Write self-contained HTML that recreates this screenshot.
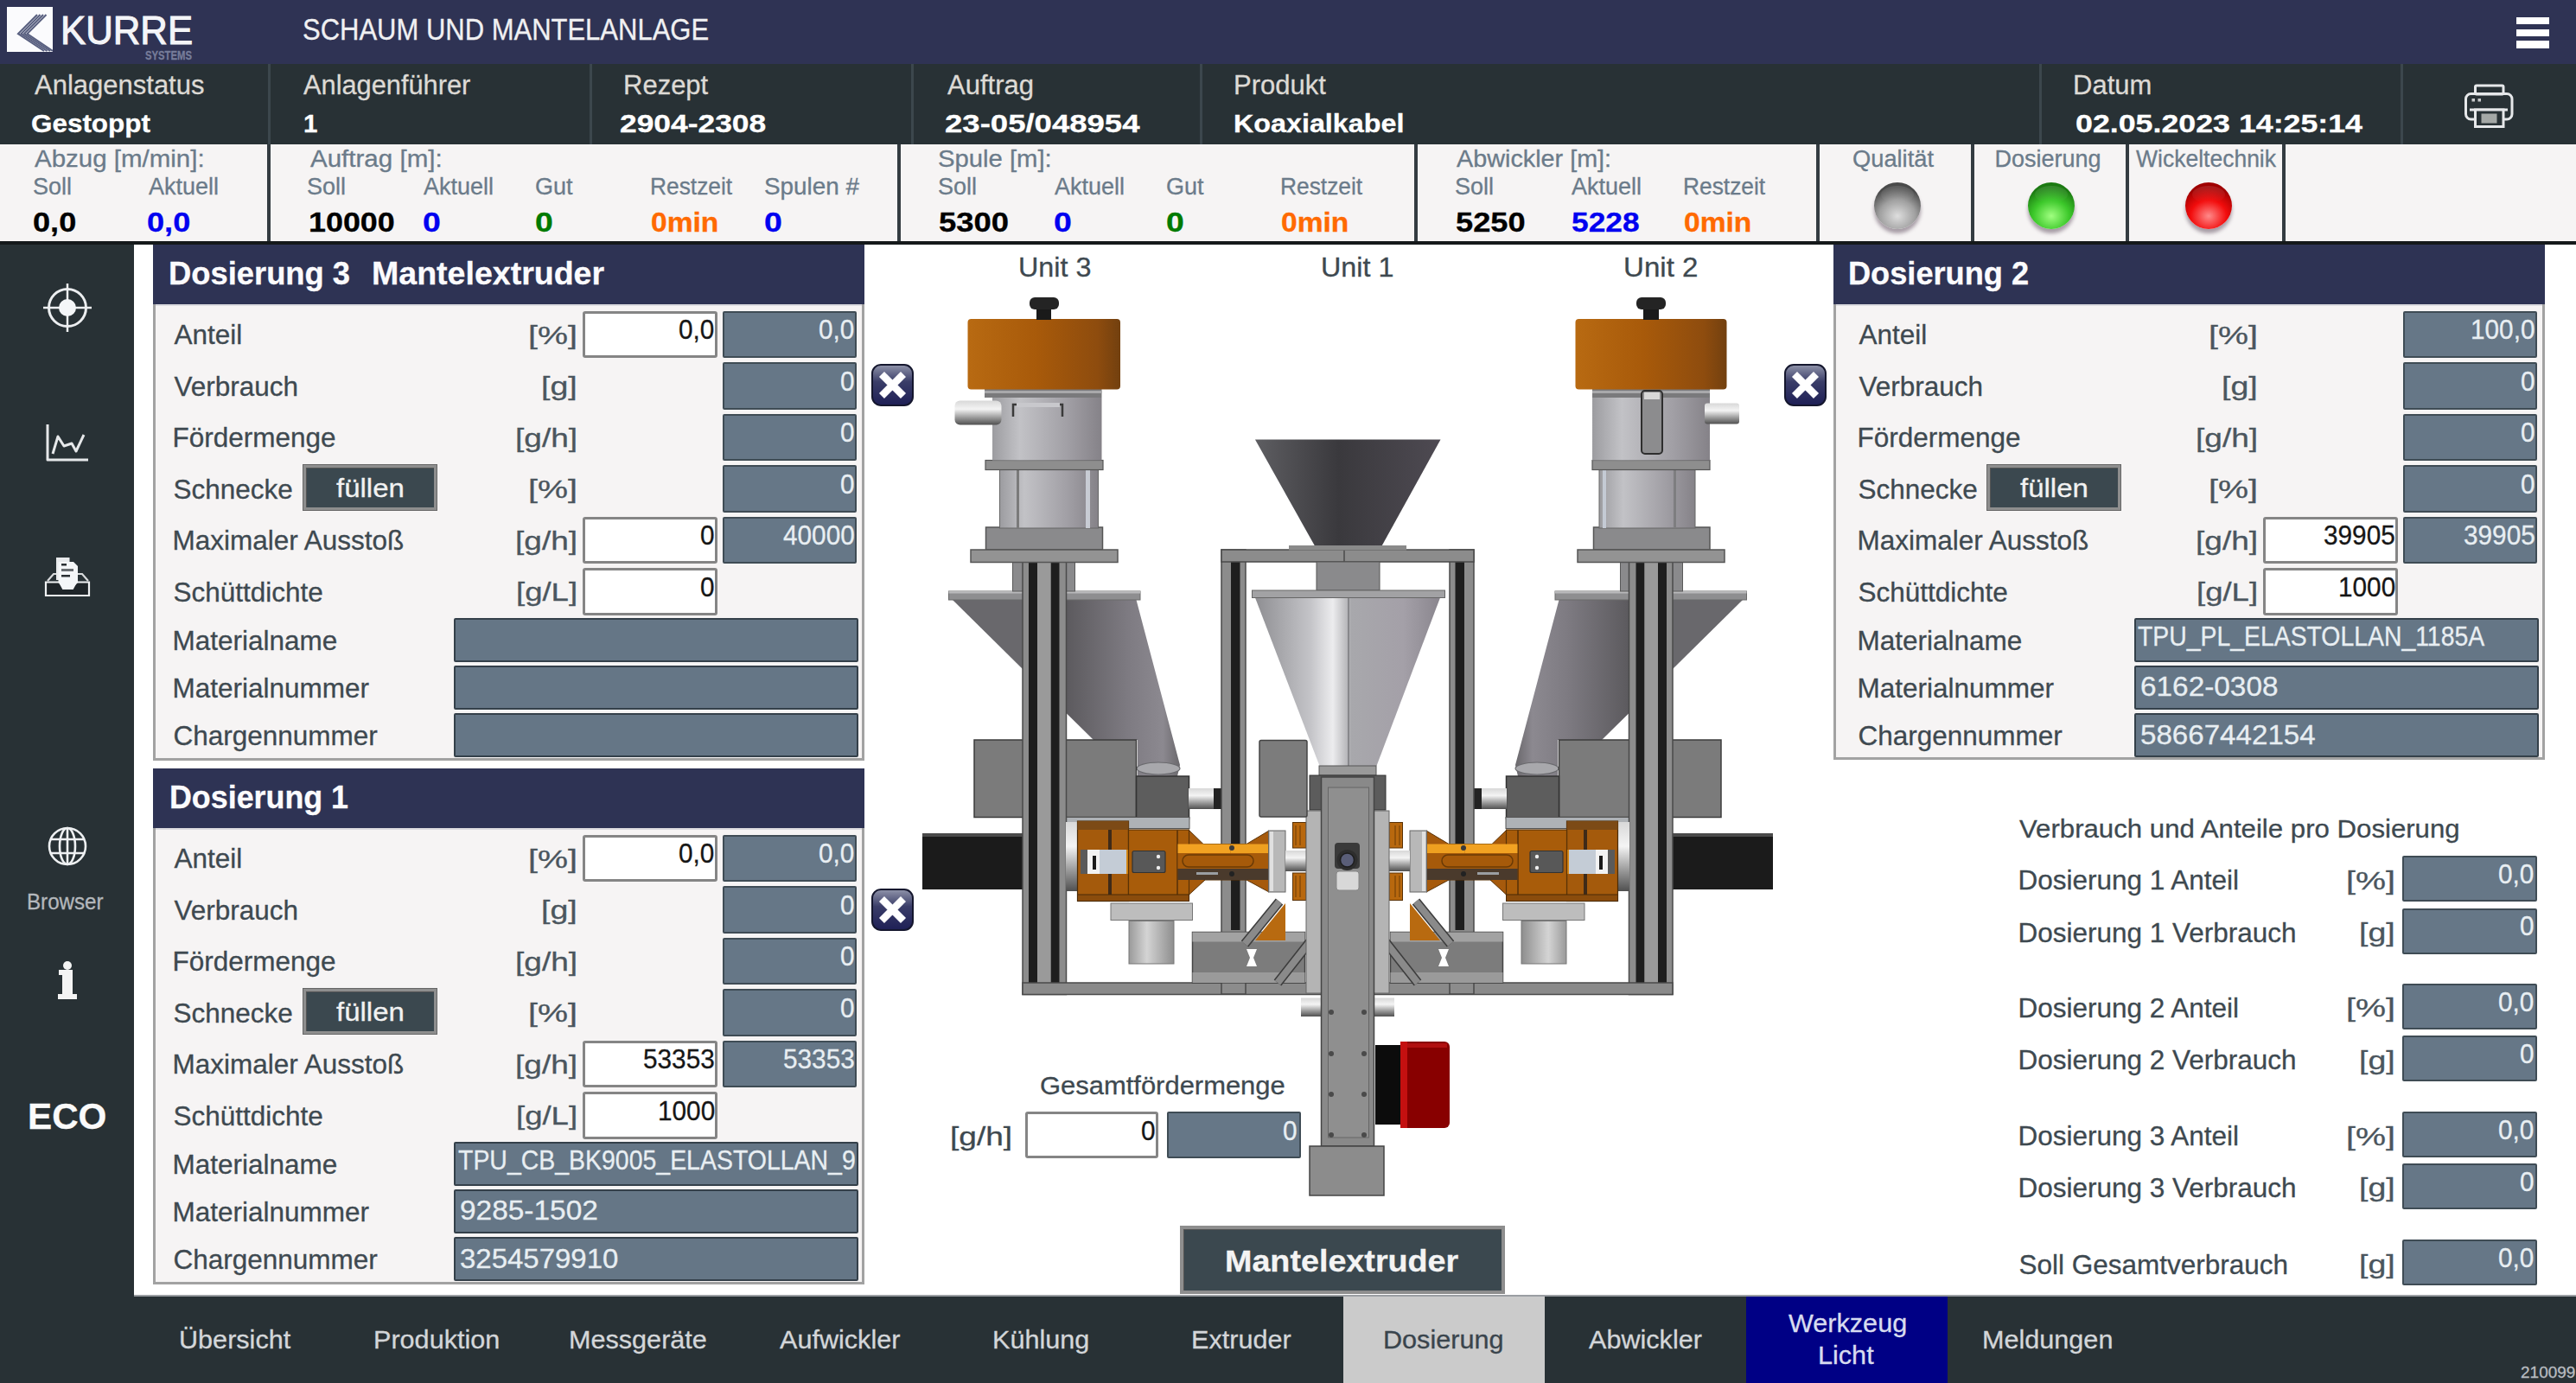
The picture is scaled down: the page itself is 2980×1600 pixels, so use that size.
<!DOCTYPE html>
<html><head><meta charset="utf-8">
<style>
html,body{margin:0;padding:0}
body{width:2980px;height:1600px;overflow:hidden;position:relative;background:#fff;font-family:"Liberation Sans",sans-serif}
.a{position:absolute;box-sizing:border-box}
.t{position:absolute;line-height:1;white-space:nowrap;transform-origin:0 0;-webkit-text-stroke:0.3px currentColor}
</style></head><body>
<div class="a" style="left:0px;top:0px;width:2980px;height:74px;background:#2f3354"></div>
<div class="a" style="left:8px;top:8px;width:53px;height:52px;background:#fbfbfd"></div>
<svg class="a" style="left:8px;top:8px" width="53" height="52" viewBox="0 0 53 52">
<g stroke="#596080" stroke-width="2.1" fill="none">
<path d="M35 9 L13 31 L43 51"/><path d="M38.5 9 L16.5 31 L46.5 51"/><path d="M42 9 L20 31 L50 51"/><path d="M45.5 9 L23.5 31 L53 51"/>
</g></svg>
<div class="t" style="left:69.91px;top:10.51px;font-size:47px;color:#f4f5f8;transform:scaleX(0.9302);-webkit-text-stroke:1.1px #f4f5f8">KURRE</div>
<div class="t" style="left:167.70px;top:56.30px;font-size:15px;color:#777d9a;font-weight:bold;transform:scaleX(0.7534)">SYSTEMS</div>
<div class="t" style="left:350.11px;top:15.87px;font-size:35px;color:#f0f0f2;transform:scaleX(0.8854)">SCHAUM UND MANTELANLAGE</div>
<div class="a" style="left:2911px;top:19.5px;width:38px;height:8.5px;background:#fff"></div>
<div class="a" style="left:2911px;top:33.5px;width:38px;height:8.5px;background:#fff"></div>
<div class="a" style="left:2911px;top:47px;width:38px;height:8.5px;background:#fff"></div>
<div class="a" style="left:0px;top:74px;width:2980px;height:93px;background:#283135"></div>
<div class="a" style="left:310px;top:74px;width:3px;height:93px;background:#3c474d"></div>
<div class="a" style="left:682px;top:74px;width:3px;height:93px;background:#3c474d"></div>
<div class="a" style="left:1054px;top:74px;width:3px;height:93px;background:#3c474d"></div>
<div class="a" style="left:1388px;top:74px;width:3px;height:93px;background:#3c474d"></div>
<div class="a" style="left:2359px;top:74px;width:3px;height:93px;background:#3c474d"></div>
<div class="a" style="left:2777px;top:74px;width:3px;height:93px;background:#3c474d"></div>
<div class="t" style="left:40.00px;top:83.26px;font-size:31px;color:#dddad5">Anlagenstatus</div>
<div class="t" style="left:35.94px;top:128.03px;font-size:29.5px;color:#fff;font-weight:bold;transform:scaleX(1.0650)">Gestoppt</div>
<div class="t" style="left:351.00px;top:83.26px;font-size:31px;color:#dddad5;transform:scaleX(0.9927)">Anlagenführer</div>
<div class="t" style="left:351.00px;top:128.03px;font-size:29.5px;color:#fff;font-weight:bold">1</div>
<div class="t" style="left:721.00px;top:83.26px;font-size:31px;color:#dddad5">Rezept</div>
<div class="t" style="left:716.80px;top:128.03px;font-size:29.5px;color:#fff;font-weight:bold;transform:scaleX(1.1993)">2904-2308</div>
<div class="t" style="left:1096.00px;top:83.26px;font-size:31px;color:#dddad5">Auftrag</div>
<div class="t" style="left:1092.76px;top:128.03px;font-size:29.5px;color:#fff;font-weight:bold;transform:scaleX(1.2385)">23-05/048954</div>
<div class="t" style="left:1427.00px;top:83.26px;font-size:31px;color:#dddad5">Produkt</div>
<div class="t" style="left:1426.91px;top:128.03px;font-size:29.5px;color:#fff;font-weight:bold;transform:scaleX(1.0944)">Koaxialkabel</div>
<div class="t" style="left:2398.00px;top:83.26px;font-size:31px;color:#dddad5">Datum</div>
<div class="t" style="left:2400.79px;top:128.03px;font-size:29.5px;color:#fff;font-weight:bold;transform:scaleX(1.2120)">02.05.2023 14:25:14</div>
<svg class="a" style="left:2848px;top:96px" width="62" height="54" viewBox="0 0 62 54">
<g fill="none" stroke="#e6e8ea" stroke-width="3">
<rect x="15.5" y="3" width="32.5" height="10" rx="1.5"/>
<rect x="4.5" y="12.5" width="53.5" height="29.5" rx="6"/>
<path d="M9 31 H53"/>
</g>
<rect x="15.5" y="31" width="32.5" height="19.5" fill="#283135" stroke="#e6e8ea" stroke-width="3"/>
<rect x="22.5" y="35.5" width="18" height="11" fill="#a4a8a6"/>
<rect x="11.5" y="18" width="3.5" height="3.5" fill="#c8cacc"/><rect x="18.5" y="18" width="3.5" height="3.5" fill="#c8cacc"/>
</svg>
<div class="a" style="left:0px;top:167px;width:2980px;height:112px;background:#f6f4f4"></div>
<div class="a" style="left:309px;top:167px;width:4px;height:112px;background:#343c41"></div>
<div class="a" style="left:1038px;top:167px;width:4px;height:112px;background:#343c41"></div>
<div class="a" style="left:1636px;top:167px;width:4px;height:112px;background:#343c41"></div>
<div class="a" style="left:2101px;top:167px;width:4px;height:112px;background:#343c41"></div>
<div class="a" style="left:2280px;top:167px;width:4px;height:112px;background:#343c41"></div>
<div class="a" style="left:2459px;top:167px;width:4px;height:112px;background:#343c41"></div>
<div class="a" style="left:2640px;top:167px;width:4px;height:112px;background:#343c41"></div>
<div class="t" style="left:40.00px;top:171.14px;font-size:27px;color:#6b7b8a;transform:scaleX(1.0921)">Abzug [m/min]:</div>
<div class="t" style="left:38.00px;top:203.14px;font-size:27px;color:#6b7b8a">Soll</div>
<div class="t" style="left:172.00px;top:203.14px;font-size:27px;color:#6b7b8a">Aktuell</div>
<div class="t" style="left:37.85px;top:241.84px;font-size:31.5px;color:#000;font-weight:bold;transform:scaleX(1.1474)">0,0</div>
<div class="t" style="left:169.85px;top:241.84px;font-size:31.5px;color:#0000f0;font-weight:bold;transform:scaleX(1.1474)">0,0</div>
<div class="t" style="left:359.00px;top:171.14px;font-size:27px;color:#6b7b8a;transform:scaleX(1.0938)">Auftrag [m]:</div>
<div class="t" style="left:355.00px;top:203.14px;font-size:27px;color:#6b7b8a">Soll</div>
<div class="t" style="left:490.00px;top:203.14px;font-size:27px;color:#6b7b8a">Aktuell</div>
<div class="t" style="left:619.00px;top:203.14px;font-size:27px;color:#6b7b8a">Gut</div>
<div class="t" style="left:752.05px;top:203.14px;font-size:27px;color:#6b7b8a;transform:scaleX(0.9757)">Restzeit</div>
<div class="t" style="left:883.97px;top:203.14px;font-size:27px;color:#6b7b8a;transform:scaleX(1.0325)">Spulen #</div>
<div class="t" style="left:356.86px;top:241.84px;font-size:31.5px;color:#000;font-weight:bold;transform:scaleX(1.1385)">10000</div>
<div class="t" style="left:488.81px;top:241.84px;font-size:31.5px;color:#0000f0;font-weight:bold;transform:scaleX(1.1875)">0</div>
<div class="t" style="left:618.81px;top:241.84px;font-size:31.5px;color:#007a00;font-weight:bold;transform:scaleX(1.1875)">0</div>
<div class="t" style="left:752.93px;top:241.84px;font-size:31.5px;color:#ff6a00;font-weight:bold;transform:scaleX(1.0662)">0min</div>
<div class="t" style="left:883.81px;top:241.84px;font-size:31.5px;color:#0000f0;font-weight:bold;transform:scaleX(1.1875)">0</div>
<div class="t" style="left:1084.92px;top:171.14px;font-size:27px;color:#6b7b8a;transform:scaleX(1.0836)">Spule [m]:</div>
<div class="t" style="left:1085.00px;top:203.14px;font-size:27px;color:#6b7b8a">Soll</div>
<div class="t" style="left:1220.00px;top:203.14px;font-size:27px;color:#6b7b8a">Aktuell</div>
<div class="t" style="left:1349.00px;top:203.14px;font-size:27px;color:#6b7b8a">Gut</div>
<div class="t" style="left:1481.05px;top:203.14px;font-size:27px;color:#6b7b8a;transform:scaleX(0.9757)">Restzeit</div>
<div class="t" style="left:1086.00px;top:241.84px;font-size:31.5px;color:#000;font-weight:bold;transform:scaleX(1.1573)">5300</div>
<div class="t" style="left:1218.81px;top:241.84px;font-size:31.5px;color:#0000f0;font-weight:bold;transform:scaleX(1.1875)">0</div>
<div class="t" style="left:1348.81px;top:241.84px;font-size:31.5px;color:#007a00;font-weight:bold;transform:scaleX(1.1875)">0</div>
<div class="t" style="left:1481.93px;top:241.84px;font-size:31.5px;color:#ff6a00;font-weight:bold;transform:scaleX(1.0662)">0min</div>
<div class="t" style="left:1685.00px;top:171.14px;font-size:27px;color:#6b7b8a;transform:scaleX(1.0659)">Abwickler [m]:</div>
<div class="t" style="left:1683.00px;top:203.14px;font-size:27px;color:#6b7b8a">Soll</div>
<div class="t" style="left:1818.00px;top:203.14px;font-size:27px;color:#6b7b8a">Aktuell</div>
<div class="t" style="left:1947.05px;top:203.14px;font-size:27px;color:#6b7b8a;transform:scaleX(0.9757)">Restzeit</div>
<div class="t" style="left:1684.00px;top:241.84px;font-size:31.5px;color:#000;font-weight:bold;transform:scaleX(1.1501)">5250</div>
<div class="t" style="left:1818.00px;top:241.84px;font-size:31.5px;color:#0000f0;font-weight:bold;transform:scaleX(1.1214)">5228</div>
<div class="t" style="left:1947.93px;top:241.84px;font-size:31.5px;color:#ff6a00;font-weight:bold;transform:scaleX(1.0662)">0min</div>
<div class="t" style="left:2143.24px;top:171.14px;font-size:27px;color:#6b7b8a;transform:scaleX(1.0103)">Qualität</div>
<div class="t" style="left:2307.50px;top:171.14px;font-size:27px;color:#6b7b8a">Dosierung</div>
<div class="t" style="left:2470.75px;top:171.14px;font-size:27px;color:#6b7b8a;transform:scaleX(0.9816)">Wickeltechnik</div>
<div class="a" style="left:2167.5px;top:211px;width:54px;height:54px;border-radius:50%;
background:radial-gradient(ellipse 70% 62% at 50% 72%,#dedede 0%,#a0a0a0 55%,#4a4a4a 100%);box-shadow:0 5px 4px rgba(70,50,70,.45)"></div>
<div class="a" style="left:2175.5px;top:215px;width:38px;height:20px;border-radius:50%;background:linear-gradient(rgba(255,255,255,.12),rgba(255,255,255,0))"></div>
<div class="a" style="left:2346px;top:211px;width:54px;height:54px;border-radius:50%;
background:radial-gradient(ellipse 70% 62% at 50% 72%,#a0ff80 0%,#3cc82a 55%,#1c7a12 100%);box-shadow:0 5px 4px rgba(70,50,70,.45)"></div>
<div class="a" style="left:2354px;top:215px;width:38px;height:20px;border-radius:50%;background:linear-gradient(rgba(255,255,255,.12),rgba(255,255,255,0))"></div>
<div class="a" style="left:2528px;top:211px;width:54px;height:54px;border-radius:50%;
background:radial-gradient(ellipse 70% 62% at 50% 72%,#ff8a8a 0%,#f20c0c 55%,#a00000 100%);box-shadow:0 5px 4px rgba(70,50,70,.45)"></div>
<div class="a" style="left:2536px;top:215px;width:38px;height:20px;border-radius:50%;background:linear-gradient(rgba(255,255,255,.12),rgba(255,255,255,0))"></div>
<div class="a" style="left:0px;top:279px;width:2980px;height:4px;background:#15191b"></div>
<div class="a" style="left:0px;top:283px;width:155px;height:1217px;background:#283135"></div>
<svg class="a" style="left:0;top:283px" width="155" height="1217" viewBox="0 283 155 1217">
<g stroke="#eceef0" fill="none">
 <circle cx="78" cy="356" r="21.5" stroke-width="3"/>
 <path d="M50 356 H106 M78 328 V384" stroke-width="2.5"/>
</g>
<circle cx="78" cy="356" r="10" fill="#f4f6f8"/>
<g stroke="#e6e8ea" fill="none" stroke-width="3" stroke-linejoin="round">
 <path d="M55 491 V532 H102"/>
 <path d="M61 525 L67 505 L74 516 L83 513 L88 522 L97 503"/>
</g>
<g>
 <path d="M53 673.5 H69 L73 681 H84 L88 673.5 H103 V689 H53 Z" fill="#1f2529" stroke="#f0f2f4" stroke-width="2.2"/>
 <path d="M55 672 L62 664 H95 L102 672" fill="none" stroke="#d8dadc" stroke-width="2.2"/>
 <rect x="65" y="645" width="15.5" height="26" fill="#e8eaec"/>
 <path d="M67.5 650 H85 L90 655 V674 L84 680 H73 L67.5 674 Z" fill="#f4f6f8"/>
 <rect x="71" y="652" width="6" height="2.5" fill="#2a2f33"/>
 <rect x="71" y="658" width="14" height="3" fill="#6a6e72"/>
 <rect x="71" y="665" width="10" height="2.5" fill="#2a2f33"/>
</g>
<g stroke="#eef0f2" fill="none" stroke-width="2.6">
 <circle cx="78" cy="979" r="21"/>
 <ellipse cx="78" cy="979" rx="9" ry="21"/>
 <path d="M58 971 H98 M58 987 H98 M78 958 V1000"/>
</g>
<path d="M72 1122 H84 V1150 H89 V1156 H67 V1150 H72 V1128 H68 V1122 Z" fill="#f4f4f4"/>
<circle cx="78" cy="1117" r="5" fill="#f4f4f4"/>
</svg>

<div class="t" style="left:31.14px;top:1029.99px;font-size:26px;color:#b4b8bc;transform:scaleX(0.9285)">Browser</div>
<div class="t" style="left:32.04px;top:1269.60px;font-size:43px;color:#fafafa;font-weight:bold;transform:scaleX(0.9807)">ECO</div>
<div class="a" style="left:0px;top:1500px;width:2980px;height:100px;background:#283135"></div>
<div class="t" style="left:206.86px;top:1536.45px;font-size:29px;color:#d3d6d9;transform:scaleX(1.0550)">Übersicht</div>
<div class="t" style="left:431.91px;top:1536.45px;font-size:29px;color:#d3d6d9;transform:scaleX(1.0550)">Produktion</div>
<div class="t" style="left:658.12px;top:1536.45px;font-size:29px;color:#d3d6d9;transform:scaleX(1.0550)">Messgeräte</div>
<div class="t" style="left:901.61px;top:1536.45px;font-size:29px;color:#d3d6d9;transform:scaleX(1.0550)">Aufwickler</div>
<div class="t" style="left:1147.90px;top:1536.45px;font-size:29px;color:#d3d6d9;transform:scaleX(1.0550)">Kühlung</div>
<div class="t" style="left:1378.45px;top:1536.45px;font-size:29px;color:#d3d6d9;transform:scaleX(1.0550)">Extruder</div>
<div class="a" style="left:1554px;top:1500px;width:233px;height:100px;background:#cbcbcb"></div>
<div class="t" style="left:1600.31px;top:1536.45px;font-size:29px;color:#3a454d;transform:scaleX(1.0550)">Dosierung</div>
<div class="t" style="left:1837.86px;top:1536.45px;font-size:29px;color:#d3d6d9;transform:scaleX(1.0550)">Abwickler</div>
<div class="a" style="left:2020px;top:1500px;width:233px;height:100px;background:#000085"></div>
<div class="t" style="left:2068.51px;top:1517.45px;font-size:29px;color:#d8dcf0;transform:scaleX(1.0550)">Werkzeug</div>
<div class="t" style="left:2103.16px;top:1554.45px;font-size:29px;color:#d8dcf0;transform:scaleX(1.0550)">Licht</div>
<div class="t" style="left:2293.34px;top:1536.45px;font-size:29px;color:#d3d6d9;transform:scaleX(1.0550)">Meldungen</div>
<div class="t" style="left:2916.00px;top:1577.52px;font-size:19px;color:#b8bcc0">210099</div>
<div class="a" style="left:155px;top:1498px;width:2825px;height:2px;background:#9a9ea2"></div>
<div class="a" style="left:177px;top:283px;width:823px;height:597px;background:#f6f4f4;border:3px solid #a2a2a2;border-top:none"></div>
<div class="a" style="left:177px;top:283px;width:823px;height:69px;background:#2e3354"></div>
<div class="a" style="left:180px;top:352px;width:817px;height:2px;background:#dcdce0"></div>
<div class="t" style="left:194.98px;top:298.53px;font-size:36px;color:#fbfbfd;font-weight:bold;transform:scaleX(1.0097)">Dosierung 3</div>
<div class="t" style="left:429.91px;top:298.53px;font-size:36px;color:#fbfbfd;font-weight:bold;transform:scaleX(1.0427)">Mantelextruder</div>
<div class="t" style="left:201.50px;top:372.34px;font-size:31.5px;color:#3e4950">Anteil</div>
<div class="t" style="left:610.88px;top:372.61px;font-size:30px;color:#4b565e;transform:scaleX(1.3122)">[%]</div>
<div class="a" style="left:674px;top:359.5px;width:156px;height:54.5px;background:#fff;border:3px solid #858585;border-radius:3px"></div>
<div class="t" style="left:785.37px;top:365.41px;font-size:32px;color:#161616;transform:scaleX(0.9300)">0,0</div>
<div class="a" style="left:836px;top:359.5px;width:155px;height:54.5px;background:#667787;border:2px solid #3f4c55;border-radius:2px"></div>
<div class="t" style="left:947.37px;top:365.41px;font-size:32px;color:#e8eef2;transform:scaleX(0.9300)">0,0</div>
<div class="t" style="left:201.50px;top:431.84px;font-size:31.5px;color:#3e4950">Verbrauch</div>
<div class="t" style="left:626.00px;top:432.11px;font-size:30px;color:#4b565e;transform:scaleX(1.2492)">[g]</div>
<div class="a" style="left:836px;top:419.0px;width:155px;height:54.5px;background:#667787;border:2px solid #3f4c55;border-radius:2px"></div>
<div class="t" style="left:972.19px;top:424.91px;font-size:32px;color:#e8eef2;transform:scaleX(0.9300)">0</div>
<div class="t" style="left:199.50px;top:491.34px;font-size:31.5px;color:#3e4950">Fördermenge</div>
<div class="t" style="left:595.53px;top:491.61px;font-size:30px;color:#4b565e;transform:scaleX(1.2355)">[g/h]</div>
<div class="a" style="left:836px;top:478.5px;width:155px;height:54.5px;background:#667787;border:2px solid #3f4c55;border-radius:2px"></div>
<div class="t" style="left:972.19px;top:484.41px;font-size:32px;color:#e8eef2;transform:scaleX(0.9300)">0</div>
<div class="t" style="left:200.50px;top:550.84px;font-size:31.5px;color:#3e4950">Schnecke</div>
<div class="t" style="left:610.88px;top:551.11px;font-size:30px;color:#4b565e;transform:scaleX(1.3122)">[%]</div>
<div class="a" style="left:836px;top:538.0px;width:155px;height:54.5px;background:#667787;border:2px solid #3f4c55;border-radius:2px"></div>
<div class="t" style="left:972.19px;top:543.91px;font-size:32px;color:#e8eef2;transform:scaleX(0.9300)">0</div>
<div class="a" style="left:350.5px;top:537.5px;width:154.0px;height:52.0px;background:#3b484f;border:3px solid #8e8e8e;box-shadow:inset 1px 1px 0 #555, 0 0 0 1px #666"></div>
<div class="t" style="left:389.00px;top:550.11px;font-size:30px;color:#f2f2f2;transform:scaleX(1.0995)">füllen</div>
<div class="t" style="left:199.50px;top:610.34px;font-size:31.5px;color:#3e4950">Maximaler Ausstoß</div>
<div class="t" style="left:595.53px;top:610.61px;font-size:30px;color:#4b565e;transform:scaleX(1.2355)">[g/h]</div>
<div class="a" style="left:674px;top:597.5px;width:156px;height:54.5px;background:#fff;border:3px solid #858585;border-radius:3px"></div>
<div class="t" style="left:810.19px;top:603.41px;font-size:32px;color:#161616;transform:scaleX(0.9300)">0</div>
<div class="a" style="left:836px;top:597.5px;width:155px;height:54.5px;background:#667787;border:2px solid #3f4c55;border-radius:2px"></div>
<div class="t" style="left:905.99px;top:603.41px;font-size:32px;color:#e8eef2;transform:scaleX(0.9300)">40000</div>
<div class="t" style="left:200.50px;top:669.84px;font-size:31.5px;color:#3e4950">Schüttdichte</div>
<div class="t" style="left:596.57px;top:670.11px;font-size:30px;color:#4b565e;transform:scaleX(1.2173)">[g/L]</div>
<div class="a" style="left:674px;top:657.0px;width:156px;height:54.5px;background:#fff;border:3px solid #858585;border-radius:3px"></div>
<div class="t" style="left:810.19px;top:662.91px;font-size:32px;color:#161616;transform:scaleX(0.9300)">0</div>
<div class="t" style="left:199.50px;top:725.84px;font-size:31.5px;color:#3e4950">Materialname</div>
<div class="a" style="left:525px;top:715px;width:468px;height:50.5px;background:#657686;border:2px solid #34404a;border-radius:2px"></div>
<div class="t" style="left:199.50px;top:780.84px;font-size:31.5px;color:#3e4950">Materialnummer</div>
<div class="a" style="left:525px;top:770px;width:468px;height:50.5px;background:#657686;border:2px solid #34404a;border-radius:2px"></div>
<div class="t" style="left:200.50px;top:835.84px;font-size:31.5px;color:#3e4950">Chargennummer</div>
<div class="a" style="left:525px;top:825px;width:468px;height:50.5px;background:#657686;border:2px solid #34404a;border-radius:2px"></div>
<div class="a" style="left:177px;top:889px;width:823px;height:597px;background:#f6f4f4;border:3px solid #a2a2a2;border-top:none"></div>
<div class="a" style="left:177px;top:889px;width:823px;height:69px;background:#2e3354"></div>
<div class="a" style="left:180px;top:958px;width:817px;height:2px;background:#dcdce0"></div>
<div class="t" style="left:195.71px;top:904.53px;font-size:36px;color:#fbfbfd;font-weight:bold;transform:scaleX(0.9951)">Dosierung 1</div>
<div class="t" style="left:201.50px;top:978.34px;font-size:31.5px;color:#3e4950">Anteil</div>
<div class="t" style="left:610.88px;top:978.61px;font-size:30px;color:#4b565e;transform:scaleX(1.3122)">[%]</div>
<div class="a" style="left:674px;top:965.5px;width:156px;height:54.5px;background:#fff;border:3px solid #858585;border-radius:3px"></div>
<div class="t" style="left:785.37px;top:971.41px;font-size:32px;color:#161616;transform:scaleX(0.9300)">0,0</div>
<div class="a" style="left:836px;top:965.5px;width:155px;height:54.5px;background:#667787;border:2px solid #3f4c55;border-radius:2px"></div>
<div class="t" style="left:947.37px;top:971.41px;font-size:32px;color:#e8eef2;transform:scaleX(0.9300)">0,0</div>
<div class="t" style="left:201.50px;top:1037.84px;font-size:31.5px;color:#3e4950">Verbrauch</div>
<div class="t" style="left:626.00px;top:1038.11px;font-size:30px;color:#4b565e;transform:scaleX(1.2492)">[g]</div>
<div class="a" style="left:836px;top:1025.0px;width:155px;height:54.5px;background:#667787;border:2px solid #3f4c55;border-radius:2px"></div>
<div class="t" style="left:972.19px;top:1030.91px;font-size:32px;color:#e8eef2;transform:scaleX(0.9300)">0</div>
<div class="t" style="left:199.50px;top:1097.34px;font-size:31.5px;color:#3e4950">Fördermenge</div>
<div class="t" style="left:595.53px;top:1097.61px;font-size:30px;color:#4b565e;transform:scaleX(1.2355)">[g/h]</div>
<div class="a" style="left:836px;top:1084.5px;width:155px;height:54.5px;background:#667787;border:2px solid #3f4c55;border-radius:2px"></div>
<div class="t" style="left:972.19px;top:1090.41px;font-size:32px;color:#e8eef2;transform:scaleX(0.9300)">0</div>
<div class="t" style="left:200.50px;top:1156.84px;font-size:31.5px;color:#3e4950">Schnecke</div>
<div class="t" style="left:610.88px;top:1157.11px;font-size:30px;color:#4b565e;transform:scaleX(1.3122)">[%]</div>
<div class="a" style="left:836px;top:1144.0px;width:155px;height:54.5px;background:#667787;border:2px solid #3f4c55;border-radius:2px"></div>
<div class="t" style="left:972.19px;top:1149.91px;font-size:32px;color:#e8eef2;transform:scaleX(0.9300)">0</div>
<div class="a" style="left:350.5px;top:1143.5px;width:154.0px;height:52.0px;background:#3b484f;border:3px solid #8e8e8e;box-shadow:inset 1px 1px 0 #555, 0 0 0 1px #666"></div>
<div class="t" style="left:389.00px;top:1156.11px;font-size:30px;color:#f2f2f2;transform:scaleX(1.0995)">füllen</div>
<div class="t" style="left:199.50px;top:1216.34px;font-size:31.5px;color:#3e4950">Maximaler Ausstoß</div>
<div class="t" style="left:595.53px;top:1216.61px;font-size:30px;color:#4b565e;transform:scaleX(1.2355)">[g/h]</div>
<div class="a" style="left:674px;top:1203.5px;width:156px;height:54.5px;background:#fff;border:3px solid #858585;border-radius:3px"></div>
<div class="t" style="left:743.99px;top:1209.41px;font-size:32px;color:#161616;transform:scaleX(0.9300)">53353</div>
<div class="a" style="left:836px;top:1203.5px;width:155px;height:54.5px;background:#667787;border:2px solid #3f4c55;border-radius:2px"></div>
<div class="t" style="left:905.99px;top:1209.41px;font-size:32px;color:#e8eef2;transform:scaleX(0.9300)">53353</div>
<div class="t" style="left:200.50px;top:1275.84px;font-size:31.5px;color:#3e4950">Schüttdichte</div>
<div class="t" style="left:596.57px;top:1276.11px;font-size:30px;color:#4b565e;transform:scaleX(1.2173)">[g/L]</div>
<div class="a" style="left:674px;top:1263.0px;width:156px;height:54.5px;background:#fff;border:3px solid #858585;border-radius:3px"></div>
<div class="t" style="left:760.54px;top:1268.91px;font-size:32px;color:#161616;transform:scaleX(0.9300)">1000</div>
<div class="t" style="left:199.50px;top:1331.84px;font-size:31.5px;color:#3e4950">Materialname</div>
<div class="a" style="left:525px;top:1321px;width:468px;height:50.5px;background:#657686;border:2px solid #34404a;border-radius:2px"></div>
<div class="a" style="left:527px;top:1321px;width:462px;height:50px;overflow:hidden">
<div class="t" style="left:3.00px;top:5.31px;font-size:32px;color:#e8eef2;transform:scaleX(0.8891)">TPU_CB_BK9005_ELASTOLLAN_9</div>
</div>
<div class="t" style="left:199.50px;top:1386.84px;font-size:31.5px;color:#3e4950">Materialnummer</div>
<div class="a" style="left:525px;top:1376px;width:468px;height:50.5px;background:#657686;border:2px solid #34404a;border-radius:2px"></div>
<div class="a" style="left:527px;top:1376px;width:462px;height:50px;overflow:hidden">
<div class="t" style="left:4.96px;top:7.51px;font-size:32px;color:#e8eef2;transform:scaleX(1.0447)">9285-1502</div>
</div>
<div class="t" style="left:200.50px;top:1441.84px;font-size:31.5px;color:#3e4950">Chargennummer</div>
<div class="a" style="left:525px;top:1431px;width:468px;height:50.5px;background:#657686;border:2px solid #34404a;border-radius:2px"></div>
<div class="a" style="left:527px;top:1431px;width:462px;height:50px;overflow:hidden">
<div class="t" style="left:4.97px;top:9.41px;font-size:32px;color:#e8eef2;transform:scaleX(1.0302)">3254579910</div>
</div>
<div class="a" style="left:2121px;top:283px;width:823px;height:596px;background:#f6f4f4;border:3px solid #a2a2a2;border-top:none"></div>
<div class="a" style="left:2121px;top:283px;width:823px;height:69px;background:#2e3354"></div>
<div class="a" style="left:2124px;top:352px;width:817px;height:2px;background:#dcdce0"></div>
<div class="t" style="left:2137.99px;top:298.53px;font-size:36px;color:#fbfbfd;font-weight:bold;transform:scaleX(1.0048)">Dosierung 2</div>
<div class="t" style="left:2150.50px;top:372.34px;font-size:31.5px;color:#3e4950">Anteil</div>
<div class="t" style="left:2554.88px;top:372.61px;font-size:30px;color:#4b565e;transform:scaleX(1.3122)">[%]</div>
<div class="a" style="left:2780px;top:359.5px;width:155px;height:54.5px;background:#667787;border:2px solid #3f4c55;border-radius:2px"></div>
<div class="t" style="left:2858.27px;top:365.41px;font-size:32px;color:#e8eef2;transform:scaleX(0.9300)">100,0</div>
<div class="t" style="left:2150.50px;top:431.84px;font-size:31.5px;color:#3e4950">Verbrauch</div>
<div class="t" style="left:2570.00px;top:432.11px;font-size:30px;color:#4b565e;transform:scaleX(1.2492)">[g]</div>
<div class="a" style="left:2780px;top:419.0px;width:155px;height:54.5px;background:#667787;border:2px solid #3f4c55;border-radius:2px"></div>
<div class="t" style="left:2916.19px;top:424.91px;font-size:32px;color:#e8eef2;transform:scaleX(0.9300)">0</div>
<div class="t" style="left:2148.50px;top:491.34px;font-size:31.5px;color:#3e4950">Fördermenge</div>
<div class="t" style="left:2539.53px;top:491.61px;font-size:30px;color:#4b565e;transform:scaleX(1.2355)">[g/h]</div>
<div class="a" style="left:2780px;top:478.5px;width:155px;height:54.5px;background:#667787;border:2px solid #3f4c55;border-radius:2px"></div>
<div class="t" style="left:2916.19px;top:484.41px;font-size:32px;color:#e8eef2;transform:scaleX(0.9300)">0</div>
<div class="t" style="left:2149.50px;top:550.84px;font-size:31.5px;color:#3e4950">Schnecke</div>
<div class="t" style="left:2554.88px;top:551.11px;font-size:30px;color:#4b565e;transform:scaleX(1.3122)">[%]</div>
<div class="a" style="left:2780px;top:538.0px;width:155px;height:54.5px;background:#667787;border:2px solid #3f4c55;border-radius:2px"></div>
<div class="t" style="left:2916.19px;top:543.91px;font-size:32px;color:#e8eef2;transform:scaleX(0.9300)">0</div>
<div class="a" style="left:2298.5px;top:537.5px;width:154.0px;height:52.0px;background:#3b484f;border:3px solid #8e8e8e;box-shadow:inset 1px 1px 0 #555, 0 0 0 1px #666"></div>
<div class="t" style="left:2337.00px;top:550.11px;font-size:30px;color:#f2f2f2;transform:scaleX(1.0995)">füllen</div>
<div class="t" style="left:2148.50px;top:610.34px;font-size:31.5px;color:#3e4950">Maximaler Ausstoß</div>
<div class="t" style="left:2539.53px;top:610.61px;font-size:30px;color:#4b565e;transform:scaleX(1.2355)">[g/h]</div>
<div class="a" style="left:2618px;top:597.5px;width:156px;height:54.5px;background:#fff;border:3px solid #858585;border-radius:3px"></div>
<div class="t" style="left:2687.99px;top:603.41px;font-size:32px;color:#161616;transform:scaleX(0.9300)">39905</div>
<div class="a" style="left:2780px;top:597.5px;width:155px;height:54.5px;background:#667787;border:2px solid #3f4c55;border-radius:2px"></div>
<div class="t" style="left:2849.99px;top:603.41px;font-size:32px;color:#e8eef2;transform:scaleX(0.9300)">39905</div>
<div class="t" style="left:2149.50px;top:669.84px;font-size:31.5px;color:#3e4950">Schüttdichte</div>
<div class="t" style="left:2540.57px;top:670.11px;font-size:30px;color:#4b565e;transform:scaleX(1.2173)">[g/L]</div>
<div class="a" style="left:2618px;top:657.0px;width:156px;height:54.5px;background:#fff;border:3px solid #858585;border-radius:3px"></div>
<div class="t" style="left:2704.54px;top:662.91px;font-size:32px;color:#161616;transform:scaleX(0.9300)">1000</div>
<div class="t" style="left:2148.50px;top:725.84px;font-size:31.5px;color:#3e4950">Materialname</div>
<div class="a" style="left:2469px;top:715px;width:468px;height:50.5px;background:#657686;border:2px solid #34404a;border-radius:2px"></div>
<div class="a" style="left:2471px;top:715px;width:462px;height:50px;overflow:hidden">
<div class="t" style="left:2.00px;top:5.31px;font-size:32px;color:#e8eef2;transform:scaleX(0.8866)">TPU_PL_ELASTOLLAN_1185A</div>
</div>
<div class="t" style="left:2148.50px;top:780.84px;font-size:31.5px;color:#3e4950">Materialnummer</div>
<div class="a" style="left:2469px;top:770px;width:468px;height:50.5px;background:#657686;border:2px solid #34404a;border-radius:2px"></div>
<div class="a" style="left:2471px;top:770px;width:462px;height:50px;overflow:hidden">
<div class="t" style="left:4.96px;top:7.51px;font-size:32px;color:#e8eef2;transform:scaleX(1.0421)">6162-0308</div>
</div>
<div class="t" style="left:2149.50px;top:835.84px;font-size:31.5px;color:#3e4950">Chargennummer</div>
<div class="a" style="left:2469px;top:825px;width:468px;height:50.5px;background:#657686;border:2px solid #34404a;border-radius:2px"></div>
<div class="a" style="left:2471px;top:825px;width:462px;height:50px;overflow:hidden">
<div class="t" style="left:4.96px;top:9.41px;font-size:32px;color:#e8eef2;transform:scaleX(1.0352)">58667442154</div>
</div>
<svg class="a" style="left:1000px;top:283px" width="1120" height="1214" viewBox="1000 283 1120 1214">
<defs>
 <linearGradient id="gCap" x1="0" x2="1" y1="0" y2="0"><stop offset="0" stop-color="#b86a12"/><stop offset=".45" stop-color="#a85a0a"/><stop offset=".85" stop-color="#8e4c0e"/><stop offset="1" stop-color="#72400f"/></linearGradient>
 <linearGradient id="gBody" x1="0" x2="1"><stop offset="0" stop-color="#9c9ca0"/><stop offset=".25" stop-color="#c2c2c6"/><stop offset=".7" stop-color="#a09ea4"/><stop offset="1" stop-color="#858288"/></linearGradient>
 <linearGradient id="gPipe" x1="0" x2="0" y1="0" y2="1"><stop offset="0" stop-color="#d8d8d8"/><stop offset=".35" stop-color="#f4f4f4"/><stop offset=".7" stop-color="#9a9a9a"/><stop offset="1" stop-color="#505050"/></linearGradient>
 <linearGradient id="gTube" x1="0" x2="1"><stop offset="0" stop-color="#5c5a5e"/><stop offset=".55" stop-color="#7e7b82"/><stop offset=".85" stop-color="#8c8990"/><stop offset="1" stop-color="#6a686c"/></linearGradient>
 <linearGradient id="gDark" x1="0" x2="1"><stop offset="0" stop-color="#5e5e62"/><stop offset=".45" stop-color="#3a393d"/><stop offset="1" stop-color="#4e4a52"/></linearGradient>
 <linearGradient id="gSilver" x1="0" x2="1"><stop offset="0" stop-color="#8e8e92"/><stop offset=".3" stop-color="#c4c4c8"/><stop offset=".42" stop-color="#ececee"/><stop offset=".52" stop-color="#a8a8ac"/><stop offset=".8" stop-color="#a4a0a8"/><stop offset="1" stop-color="#8a868e"/></linearGradient>
 <linearGradient id="gCyl" x1="0" x2="1"><stop offset="0" stop-color="#9a9a9a"/><stop offset=".4" stop-color="#d4d4d4"/><stop offset="1" stop-color="#8e8e8e"/></linearGradient>
</defs>
<g>
  <!-- black bar -->
  <rect x="1067" y="964" width="120" height="65" fill="#1b1b1b"/>
  <rect x="1067" y="964" width="120" height="4" fill="#4a4a4a"/>
  <!-- hopper tube -->
  <polygon points="1233.5,694 1314.5,694 1365,885 1362,898 1316,898 1316,856 1265,856 1233.5,825" fill="url(#gTube)"/>
  <polygon points="1102,694 1183,694 1183,774" fill="#69686c"/>
  <rect x="1097.5" y="684" width="221.5" height="10" fill="#8e8e90" stroke="#6a6a6a" stroke-width="1"/>
  <rect x="1097.5" y="684" width="221.5" height="2.5" fill="#b8b8ba"/>
  <rect x="1171.5" y="650" width="72" height="34" fill="#8a8a8c" stroke="#5a5a5a" stroke-width="1"/>
  <ellipse cx="1340" cy="889" rx="25" ry="7" fill="#a8a8ac" stroke="#6a6a6e" stroke-width="1.2"/>
  <!-- blocks -->
  <rect x="1127" y="856" width="187.5" height="89.5" fill="#7b7b7b" stroke="#3c3c3c" stroke-width="1.5"/>
  <rect x="1314.5" y="898" width="61" height="49" fill="#5d5d5d" stroke="#333" stroke-width="1.5"/>
  <rect x="1233" y="945.5" width="143" height="13" fill="#aeb2b6" stroke="#555" stroke-width="1"/>
  <rect x="1375" y="912" width="30" height="24" fill="url(#gPipe)"/>
  <rect x="1404" y="912" width="17" height="24" fill="#232323"/>
  <!-- outer column -->
  <rect x="1183" y="637.5" width="50.5" height="513" fill="#8c8c8c" stroke="#4a4a4a" stroke-width="1.5"/>
  <rect x="1190" y="649" width="10" height="490" fill="#1e1e1e"/>
  <rect x="1215.5" y="649" width="10" height="490" fill="#1e1e1e"/>
  <rect x="1200" y="649" width="15.5" height="490" fill="#9a9a9a"/>
  <!-- frame bottom bar -->
  <rect x="1183" y="1137" width="380" height="13.5" fill="#8a8a8a" stroke="#4a4a4a" stroke-width="1.5"/>
  <!-- center frame post -->
  <rect x="1413" y="636" width="28" height="514" fill="#8c8c8c" stroke="#4a4a4a" stroke-width="1.5"/>
  <rect x="1424" y="650" width="10.5" height="426" fill="#1e1e1e"/>
  <rect x="1413" y="636" width="150" height="14" fill="#8c8c8c" stroke="#4a4a4a" stroke-width="1.5"/>
  <!-- orange assembly -->
  <rect x="1233" y="951" width="13" height="80" fill="url(#gPipe)"/>
  <polygon points="1375,960 1392,976.5 1442,976.5 1468,961 1468,1032 1442,1018 1394,1018 1375,1035.5" fill="#a65a0c" stroke="#5a3206" stroke-width="1"/>
  <rect x="1246.5" y="950" width="59" height="92.5" fill="#a45a0c" stroke="#4a2a06" stroke-width="1.2"/>
  <rect x="1246.5" y="950" width="59" height="10" fill="#7c4a16"/>
  <rect x="1282" y="960" width="4" height="75" fill="#3e2a18"/>
  <rect x="1250" y="983" width="55" height="28" fill="#c4ccd6"/>
  <rect x="1258" y="983" width="14" height="28" fill="#f2f2f2"/>
  <rect x="1250" y="983" width="8" height="28" fill="#5a5a5a"/>
  <rect x="1264" y="990" width="4" height="16" fill="#1a1a1a"/>
  <rect x="1303" y="983" width="7" height="28" fill="#d88a16"/>
  <rect x="1305.5" y="960" width="70" height="75.5" fill="#a85c0a" stroke="#5a3206" stroke-width="1.2"/>
  <rect x="1361" y="960" width="2" height="75.5" fill="#6a3a08"/>
  <rect x="1246.5" y="1035" width="129" height="7.5" fill="#8a4c0c" stroke="#4a2a06" stroke-width="1"/>
  <rect x="1310" y="984.5" width="38" height="25" rx="2" fill="#585858" stroke="#333" stroke-width="1.2"/>
  <circle cx="1340" cy="991" r="2.2" fill="#eee"/><circle cx="1340" cy="1004" r="2.2" fill="#eee"/>
  <rect x="1362.5" y="976.5" width="61" height="10.5" fill="#f2a222"/>
  <rect x="1423.5" y="976.5" width="44" height="10.5" fill="#eea020"/>
  <rect x="1362.5" y="987" width="105" height="18" fill="#a65a0a"/>
  <rect x="1368" y="989" width="82" height="14" rx="7" fill="none" stroke="#6a3a06" stroke-width="1.5"/>
  <rect x="1362.5" y="1005" width="105" height="13" fill="#4a3a2c"/>
  <rect x="1384" y="1009" width="25" height="3" fill="#9a9ea2"/>
  <circle cx="1425" cy="1011" r="3" fill="#222"/><circle cx="1425" cy="981" r="3" fill="#3a3a3a"/>
  <rect x="1467.5" y="961" width="19.5" height="71" fill="#b8b8b8" stroke="#666" stroke-width="1"/>
  <rect x="1469" y="962" width="4" height="69" fill="#e0e0e0"/>
  <rect x="1487" y="984" width="24" height="24" fill="url(#gPipe)"/>
  <rect x="1495.5" y="951.5" width="15.5" height="29.5" fill="#b8680e" stroke="#5a3206" stroke-width="1"/>
  <rect x="1495.5" y="1010" width="15.5" height="31.5" fill="#b8680e" stroke="#5a3206" stroke-width="1"/>
  <path d="M1499 955 V978 M1504 955 V978 M1499 1013 V1038 M1504 1013 V1038" stroke="#7a4408" stroke-width="1.2"/>
  <rect x="1285" y="1045" width="94.5" height="19.5" fill="#bdbdbd" stroke="#777" stroke-width="1"/>
  <rect x="1306" y="1065.5" width="52" height="49.5" fill="url(#gCyl)" stroke="#777" stroke-width="1"/>
  <!-- lower mechanism -->
  <rect x="1379.5" y="1078.5" width="130" height="58.5" fill="#7c7c7c" stroke="#444" stroke-width="1.5"/>
  <rect x="1379.5" y="1078.5" width="130" height="11" fill="#a2a2a2"/>
  <rect x="1379.5" y="1125" width="130" height="12" fill="#9a9a9a"/>
  <polygon points="1452,1088 1487,1045 1487,1088" fill="#b86a10"/>
  <path d="M1440 1092 L1480 1043" stroke="#3c3c3c" stroke-width="11"/><path d="M1440 1092 L1480 1043" stroke="#8a8a8a" stroke-width="8"/>
  <path d="M1478 1137 L1515 1090" stroke="#3c3c3c" stroke-width="11"/><path d="M1478 1137 L1515 1090" stroke="#8a8a8a" stroke-width="8"/>
  <path d="M1442 1098 h12 l-4 10 l4 10 h-12 l4 -10 z" fill="#fff"/>
  <!-- tube side rail & bracket -->
  <rect x="1511" y="938" width="18" height="211" fill="#b4b4b4" stroke="#666" stroke-width="1"/>
  <rect x="1505" y="1154.5" width="23" height="21.5" fill="url(#gPipe)"/>
</g>
<g transform="translate(3118,0) scale(-1,1)">
  <!-- black bar -->
  <rect x="1067" y="964" width="120" height="65" fill="#1b1b1b"/>
  <rect x="1067" y="964" width="120" height="4" fill="#4a4a4a"/>
  <!-- hopper tube -->
  <polygon points="1233.5,694 1314.5,694 1365,885 1362,898 1316,898 1316,856 1265,856 1233.5,825" fill="url(#gTube)"/>
  <polygon points="1102,694 1183,694 1183,774" fill="#69686c"/>
  <rect x="1097.5" y="684" width="221.5" height="10" fill="#8e8e90" stroke="#6a6a6a" stroke-width="1"/>
  <rect x="1097.5" y="684" width="221.5" height="2.5" fill="#b8b8ba"/>
  <rect x="1171.5" y="650" width="72" height="34" fill="#8a8a8c" stroke="#5a5a5a" stroke-width="1"/>
  <ellipse cx="1340" cy="889" rx="25" ry="7" fill="#a8a8ac" stroke="#6a6a6e" stroke-width="1.2"/>
  <!-- blocks -->
  <rect x="1127" y="856" width="187.5" height="89.5" fill="#7b7b7b" stroke="#3c3c3c" stroke-width="1.5"/>
  <rect x="1314.5" y="898" width="61" height="49" fill="#5d5d5d" stroke="#333" stroke-width="1.5"/>
  <rect x="1233" y="945.5" width="143" height="13" fill="#aeb2b6" stroke="#555" stroke-width="1"/>
  <rect x="1375" y="912" width="30" height="24" fill="url(#gPipe)"/>
  <rect x="1404" y="912" width="17" height="24" fill="#232323"/>
  <!-- outer column -->
  <rect x="1183" y="637.5" width="50.5" height="513" fill="#8c8c8c" stroke="#4a4a4a" stroke-width="1.5"/>
  <rect x="1190" y="649" width="10" height="490" fill="#1e1e1e"/>
  <rect x="1215.5" y="649" width="10" height="490" fill="#1e1e1e"/>
  <rect x="1200" y="649" width="15.5" height="490" fill="#9a9a9a"/>
  <!-- frame bottom bar -->
  <rect x="1183" y="1137" width="380" height="13.5" fill="#8a8a8a" stroke="#4a4a4a" stroke-width="1.5"/>
  <!-- center frame post -->
  <rect x="1413" y="636" width="28" height="514" fill="#8c8c8c" stroke="#4a4a4a" stroke-width="1.5"/>
  <rect x="1424" y="650" width="10.5" height="426" fill="#1e1e1e"/>
  <rect x="1413" y="636" width="150" height="14" fill="#8c8c8c" stroke="#4a4a4a" stroke-width="1.5"/>
  <!-- orange assembly -->
  <rect x="1233" y="951" width="13" height="80" fill="url(#gPipe)"/>
  <polygon points="1375,960 1392,976.5 1442,976.5 1468,961 1468,1032 1442,1018 1394,1018 1375,1035.5" fill="#a65a0c" stroke="#5a3206" stroke-width="1"/>
  <rect x="1246.5" y="950" width="59" height="92.5" fill="#a45a0c" stroke="#4a2a06" stroke-width="1.2"/>
  <rect x="1246.5" y="950" width="59" height="10" fill="#7c4a16"/>
  <rect x="1282" y="960" width="4" height="75" fill="#3e2a18"/>
  <rect x="1250" y="983" width="55" height="28" fill="#c4ccd6"/>
  <rect x="1258" y="983" width="14" height="28" fill="#f2f2f2"/>
  <rect x="1250" y="983" width="8" height="28" fill="#5a5a5a"/>
  <rect x="1264" y="990" width="4" height="16" fill="#1a1a1a"/>
  <rect x="1303" y="983" width="7" height="28" fill="#d88a16"/>
  <rect x="1305.5" y="960" width="70" height="75.5" fill="#a85c0a" stroke="#5a3206" stroke-width="1.2"/>
  <rect x="1361" y="960" width="2" height="75.5" fill="#6a3a08"/>
  <rect x="1246.5" y="1035" width="129" height="7.5" fill="#8a4c0c" stroke="#4a2a06" stroke-width="1"/>
  <rect x="1310" y="984.5" width="38" height="25" rx="2" fill="#585858" stroke="#333" stroke-width="1.2"/>
  <circle cx="1340" cy="991" r="2.2" fill="#eee"/><circle cx="1340" cy="1004" r="2.2" fill="#eee"/>
  <rect x="1362.5" y="976.5" width="61" height="10.5" fill="#f2a222"/>
  <rect x="1423.5" y="976.5" width="44" height="10.5" fill="#eea020"/>
  <rect x="1362.5" y="987" width="105" height="18" fill="#a65a0a"/>
  <rect x="1368" y="989" width="82" height="14" rx="7" fill="none" stroke="#6a3a06" stroke-width="1.5"/>
  <rect x="1362.5" y="1005" width="105" height="13" fill="#4a3a2c"/>
  <rect x="1384" y="1009" width="25" height="3" fill="#9a9ea2"/>
  <circle cx="1425" cy="1011" r="3" fill="#222"/><circle cx="1425" cy="981" r="3" fill="#3a3a3a"/>
  <rect x="1467.5" y="961" width="19.5" height="71" fill="#b8b8b8" stroke="#666" stroke-width="1"/>
  <rect x="1469" y="962" width="4" height="69" fill="#e0e0e0"/>
  <rect x="1487" y="984" width="24" height="24" fill="url(#gPipe)"/>
  <rect x="1495.5" y="951.5" width="15.5" height="29.5" fill="#b8680e" stroke="#5a3206" stroke-width="1"/>
  <rect x="1495.5" y="1010" width="15.5" height="31.5" fill="#b8680e" stroke="#5a3206" stroke-width="1"/>
  <path d="M1499 955 V978 M1504 955 V978 M1499 1013 V1038 M1504 1013 V1038" stroke="#7a4408" stroke-width="1.2"/>
  <rect x="1285" y="1045" width="94.5" height="19.5" fill="#bdbdbd" stroke="#777" stroke-width="1"/>
  <rect x="1306" y="1065.5" width="52" height="49.5" fill="url(#gCyl)" stroke="#777" stroke-width="1"/>
  <!-- lower mechanism -->
  <rect x="1379.5" y="1078.5" width="130" height="58.5" fill="#7c7c7c" stroke="#444" stroke-width="1.5"/>
  <rect x="1379.5" y="1078.5" width="130" height="11" fill="#a2a2a2"/>
  <rect x="1379.5" y="1125" width="130" height="12" fill="#9a9a9a"/>
  <polygon points="1452,1088 1487,1045 1487,1088" fill="#b86a10"/>
  <path d="M1440 1092 L1480 1043" stroke="#3c3c3c" stroke-width="11"/><path d="M1440 1092 L1480 1043" stroke="#8a8a8a" stroke-width="8"/>
  <path d="M1478 1137 L1515 1090" stroke="#3c3c3c" stroke-width="11"/><path d="M1478 1137 L1515 1090" stroke="#8a8a8a" stroke-width="8"/>
  <path d="M1442 1098 h12 l-4 10 l4 10 h-12 l4 -10 z" fill="#fff"/>
  <!-- tube side rail & bracket -->
  <rect x="1511" y="938" width="18" height="211" fill="#b4b4b4" stroke="#666" stroke-width="1"/>
  <rect x="1505" y="1154.5" width="23" height="21.5" fill="url(#gPipe)"/>
</g>
<!-- unit 3 top -->
<rect x="1140.5" y="610" width="135" height="26" fill="#8a8a8c" stroke="#555" stroke-width="1.5"/>
<rect x="1123" y="636" width="170" height="14.5" fill="#939393" stroke="#555" stroke-width="1.5"/>
<rect x="1156.5" y="543.5" width="114" height="67.5" fill="url(#gBody)" stroke="#666" stroke-width="1"/>
<rect x="1176" y="543.5" width="3" height="67.5" fill="#7a7a7a"/>
<rect x="1256" y="543.5" width="5" height="67.5" fill="#c8ccd4"/>
<rect x="1140" y="532.5" width="136" height="11" fill="#8e8e8e" stroke="#555" stroke-width="1.2"/>
<rect x="1148" y="460" width="126.5" height="72.5" fill="url(#gBody)"/>
<rect x="1104.5" y="463.5" width="54" height="28" rx="6" fill="url(#gPipe)"/>
<rect x="1139" y="450" width="135.5" height="10" fill="#7a7a7c"/>
<rect x="1139" y="452" width="135.5" height="3" fill="#a8a8aa"/>
<path d="M1172 482 V468 H1229 V482" stroke="#3a3a3a" stroke-width="2.5" fill="none"/>
<rect x="1176" y="466" width="50" height="5" fill="#c8c8cc"/>
<rect x="1119.5" y="369" width="176.5" height="81.5" rx="4" fill="url(#gCap)"/>
<rect x="1199" y="355" width="17" height="15" fill="#1a1a1a"/>
<rect x="1191" y="344" width="34" height="14" rx="6" fill="#242424"/>
<!-- unit 2 top -->
<rect x="1843.5" y="610" width="134.5" height="26" fill="#8a8a8c" stroke="#555" stroke-width="1.5"/>
<rect x="1825" y="636" width="170" height="14.5" fill="#939393" stroke="#555" stroke-width="1.5"/>
<rect x="1850" y="543.5" width="111" height="67.5" fill="url(#gBody)" stroke="#666" stroke-width="1"/>
<rect x="1854" y="543.5" width="4" height="67.5" fill="#c4cad4"/>
<rect x="1936" y="543.5" width="3" height="67.5" fill="#7e7e80"/>
<rect x="1842" y="532.5" width="136" height="11" fill="#8e8e8e" stroke="#555" stroke-width="1.2"/>
<rect x="1842" y="460" width="136" height="72.5" fill="url(#gBody)"/>
<rect x="1972" y="466.5" width="40" height="24" rx="3" fill="url(#gPipe)"/>
<rect x="1842" y="450" width="136" height="10" fill="#7a7a7c"/>
<rect x="1842" y="452" width="136" height="3" fill="#a8a8aa"/>
<rect x="1899" y="452" width="24" height="73" rx="4" fill="#8c8c8e" stroke="#2e2e2e" stroke-width="2"/>
<rect x="1902" y="454" width="18" height="8" fill="#d8d8d8"/>
<rect x="1822.5" y="369" width="175" height="81.5" rx="4" fill="url(#gCap)"/>
<rect x="1901" y="355" width="18" height="15" fill="#1a1a1a"/>
<rect x="1893" y="344" width="34" height="14" rx="6" fill="#242424"/>
<!-- unit 1 -->
<rect x="1457" y="856.5" width="55" height="88.5" rx="2" fill="#7c7c7c" stroke="#444" stroke-width="1.5"/>
<polygon points="1452,508.5 1666.5,508.5 1598,632.5 1521.5,632.5" fill="url(#gDark)"/>
<rect x="1491" y="631" width="136" height="5.5" fill="#8a8a8a"/>
<rect x="1523" y="650" width="73" height="33" fill="#8a8a8c" stroke="#555" stroke-width="1"/>
<polygon points="1452,691.5 1666,691.5 1592.5,886 1526.5,886" fill="url(#gSilver)"/>
<rect x="1448.5" y="683" width="223" height="8.5" fill="#a2a2a4" stroke="#666" stroke-width="1"/>
<path d="M1560 692 V886" stroke="#7a7a7e" stroke-width="1.5"/>
<rect x="1526" y="886" width="66" height="11" fill="#9a9a9a" stroke="#555" stroke-width="1"/>
<rect x="1515" y="897" width="88" height="40" fill="#5c5c5c" stroke="#333" stroke-width="1"/>
<rect x="1528.5" y="899" width="61" height="427" fill="#898989" stroke="#444" stroke-width="1.5"/>
<rect x="1536.5" y="911" width="47" height="405" fill="#8f8f8f" stroke="#666" stroke-width="1"/>
<g fill="#4a4a4a"><circle cx="1540" cy="1171" r="3"/><circle cx="1578" cy="1171" r="3"/><circle cx="1540" cy="1219" r="3"/><circle cx="1578" cy="1219" r="3"/><circle cx="1540" cy="1266" r="3"/><circle cx="1578" cy="1266" r="3"/><circle cx="1540" cy="1313" r="3"/><circle cx="1578" cy="1313" r="3"/></g>
<rect x="1546" y="1008" width="26" height="22" rx="3" fill="#d8d8d8" stroke="#888" stroke-width="1"/>
<rect x="1544" y="975" width="29" height="30" rx="4" fill="#3a3a3a"/>
<circle cx="1558.5" cy="995" r="12" fill="#2e2e2e"/>
<circle cx="1558.5" cy="995" r="8" fill="#5a5e78" stroke="#1e1e1e" stroke-width="1.5"/>
<rect x="1515" y="1326" width="86" height="57" fill="#8c8c8c" stroke="#444" stroke-width="1.5"/>
<rect x="1591" y="1209" width="30" height="92" fill="#0c0c0c"/>
<rect x="1620" y="1205" width="57" height="100" rx="6" fill="#880000"/>
<rect x="1620" y="1205" width="8" height="100" fill="#c41010"/>
<rect x="1628" y="1207" width="46" height="5" fill="#b01010"/>
</svg>

<div class="t" style="left:1177.92px;top:293.76px;font-size:31px;color:#3e4950;transform:scaleX(1.0419)">Unit 3</div>
<div class="t" style="left:1527.92px;top:293.76px;font-size:31px;color:#3e4950;transform:scaleX(1.0419)">Unit 1</div>
<div class="t" style="left:1877.86px;top:293.76px;font-size:31px;color:#3e4950;transform:scaleX(1.0677)">Unit 2</div>
<svg class="a" style="left:1008px;top:421px" width="49" height="49" viewBox="0 0 49 49">
<defs><linearGradient id="xg1008421" x1="0" x2="0" y1="0" y2="1"><stop offset="0" stop-color="#9094aa"/><stop offset=".42" stop-color="#3a3d68"/><stop offset="1" stop-color="#1e1f56"/></linearGradient></defs>
<rect x="1" y="1" width="47" height="47" rx="10" fill="url(#xg1008421)" stroke="#15172e" stroke-width="2"/>
<path d="M15 15 L34 34 M34 15 L15 34" stroke="#fff" stroke-width="8.5" stroke-linecap="square"/>
</svg>
<svg class="a" style="left:2064px;top:421px" width="49" height="49" viewBox="0 0 49 49">
<defs><linearGradient id="xg2064421" x1="0" x2="0" y1="0" y2="1"><stop offset="0" stop-color="#9094aa"/><stop offset=".42" stop-color="#3a3d68"/><stop offset="1" stop-color="#1e1f56"/></linearGradient></defs>
<rect x="1" y="1" width="47" height="47" rx="10" fill="url(#xg2064421)" stroke="#15172e" stroke-width="2"/>
<path d="M15 15 L34 34 M34 15 L15 34" stroke="#fff" stroke-width="8.5" stroke-linecap="square"/>
</svg>
<svg class="a" style="left:1008px;top:1028px" width="49" height="49" viewBox="0 0 49 49">
<defs><linearGradient id="xg10081028" x1="0" x2="0" y1="0" y2="1"><stop offset="0" stop-color="#9094aa"/><stop offset=".42" stop-color="#3a3d68"/><stop offset="1" stop-color="#1e1f56"/></linearGradient></defs>
<rect x="1" y="1" width="47" height="47" rx="10" fill="url(#xg10081028)" stroke="#15172e" stroke-width="2"/>
<path d="M15 15 L34 34 M34 15 L15 34" stroke="#fff" stroke-width="8.5" stroke-linecap="square"/>
</svg>
<div class="t" style="left:1202.67px;top:1241.01px;font-size:30px;color:#3e4950;transform:scaleX(1.0313)">Gesamtfördermenge</div>
<div class="t" style="left:1098.53px;top:1299.61px;font-size:30px;color:#3e4950;transform:scaleX(1.2355)">[g/h]</div>
<div class="a" style="left:1186px;top:1286px;width:154px;height:54px;background:#fff;border:3px solid #858585;border-radius:3px"></div>
<div class="t" style="left:1320.19px;top:1291.91px;font-size:32px;color:#161616;transform:scaleX(0.9300)">0</div>
<div class="a" style="left:1349.5px;top:1286px;width:155.0px;height:54px;background:#667787;border:2px solid #3f4c55;border-radius:2px"></div>
<div class="t" style="left:1484.19px;top:1291.91px;font-size:32px;color:#e8eef2;transform:scaleX(0.9300)">0</div>
<div class="a" style="left:1364.5px;top:1417.5px;width:376.0px;height:79.5px;background:#3b484f;border:4px solid #8e8e8e;box-shadow:inset 1px 1px 0 #555"></div>
<div class="t" style="left:1416.85px;top:1441.37px;font-size:35px;color:#f4f4f4;font-weight:bold;transform:scaleX(1.0771)">Mantelextruder</div>
<div class="t" style="left:2336.40px;top:944.00px;font-size:30px;color:#3e4950;transform:scaleX(1.0394)">Verbrauch und Anteile pro Dosierung</div>
<div class="t" style="left:2334.40px;top:1003.34px;font-size:31.5px;color:#3e4950">Dosierung 1 Anteil</div>
<div class="t" style="left:2713.88px;top:1003.61px;font-size:30px;color:#4b565e;transform:scaleX(1.3122)">[%]</div>
<div class="a" style="left:2779px;top:990px;width:156px;height:53px;background:#667787;border:2px solid #3f4c55;border-radius:2px"></div>
<div class="t" style="left:2890.37px;top:994.91px;font-size:32px;color:#e8eef2;transform:scaleX(0.9300)">0,0</div>
<div class="t" style="left:2334.40px;top:1063.84px;font-size:31.5px;color:#3e4950">Dosierung 1 Verbrauch</div>
<div class="t" style="left:2729.00px;top:1064.11px;font-size:30px;color:#4b565e;transform:scaleX(1.2492)">[g]</div>
<div class="a" style="left:2779px;top:1050.5px;width:156px;height:53.0px;background:#667787;border:2px solid #3f4c55;border-radius:2px"></div>
<div class="t" style="left:2915.19px;top:1055.41px;font-size:32px;color:#e8eef2;transform:scaleX(0.9300)">0</div>
<div class="t" style="left:2334.40px;top:1151.04px;font-size:31.5px;color:#3e4950">Dosierung 2 Anteil</div>
<div class="t" style="left:2713.88px;top:1151.31px;font-size:30px;color:#4b565e;transform:scaleX(1.3122)">[%]</div>
<div class="a" style="left:2779px;top:1137.7px;width:156px;height:53.0px;background:#667787;border:2px solid #3f4c55;border-radius:2px"></div>
<div class="t" style="left:2890.37px;top:1142.61px;font-size:32px;color:#e8eef2;transform:scaleX(0.9300)">0,0</div>
<div class="t" style="left:2334.40px;top:1211.34px;font-size:31.5px;color:#3e4950">Dosierung 2 Verbrauch</div>
<div class="t" style="left:2729.00px;top:1211.61px;font-size:30px;color:#4b565e;transform:scaleX(1.2492)">[g]</div>
<div class="a" style="left:2779px;top:1198px;width:156px;height:53px;background:#667787;border:2px solid #3f4c55;border-radius:2px"></div>
<div class="t" style="left:2915.19px;top:1202.91px;font-size:32px;color:#e8eef2;transform:scaleX(0.9300)">0</div>
<div class="t" style="left:2334.40px;top:1299.34px;font-size:31.5px;color:#3e4950">Dosierung 3 Anteil</div>
<div class="t" style="left:2713.88px;top:1299.61px;font-size:30px;color:#4b565e;transform:scaleX(1.3122)">[%]</div>
<div class="a" style="left:2779px;top:1286px;width:156px;height:53px;background:#667787;border:2px solid #3f4c55;border-radius:2px"></div>
<div class="t" style="left:2890.37px;top:1290.91px;font-size:32px;color:#e8eef2;transform:scaleX(0.9300)">0,0</div>
<div class="t" style="left:2334.40px;top:1359.14px;font-size:31.5px;color:#3e4950">Dosierung 3 Verbrauch</div>
<div class="t" style="left:2729.00px;top:1359.40px;font-size:30px;color:#4b565e;transform:scaleX(1.2492)">[g]</div>
<div class="a" style="left:2779px;top:1345.8px;width:156px;height:53.0px;background:#667787;border:2px solid #3f4c55;border-radius:2px"></div>
<div class="t" style="left:2915.19px;top:1350.71px;font-size:32px;color:#e8eef2;transform:scaleX(0.9300)">0</div>
<div class="t" style="left:2335.40px;top:1447.64px;font-size:31.5px;color:#3e4950">Soll Gesamtverbrauch</div>
<div class="t" style="left:2729.00px;top:1447.90px;font-size:30px;color:#4b565e;transform:scaleX(1.2492)">[g]</div>
<div class="a" style="left:2779px;top:1434.3px;width:156px;height:53.0px;background:#667787;border:2px solid #3f4c55;border-radius:2px"></div>
<div class="t" style="left:2890.37px;top:1439.21px;font-size:32px;color:#e8eef2;transform:scaleX(0.9300)">0,0</div>
</body></html>
